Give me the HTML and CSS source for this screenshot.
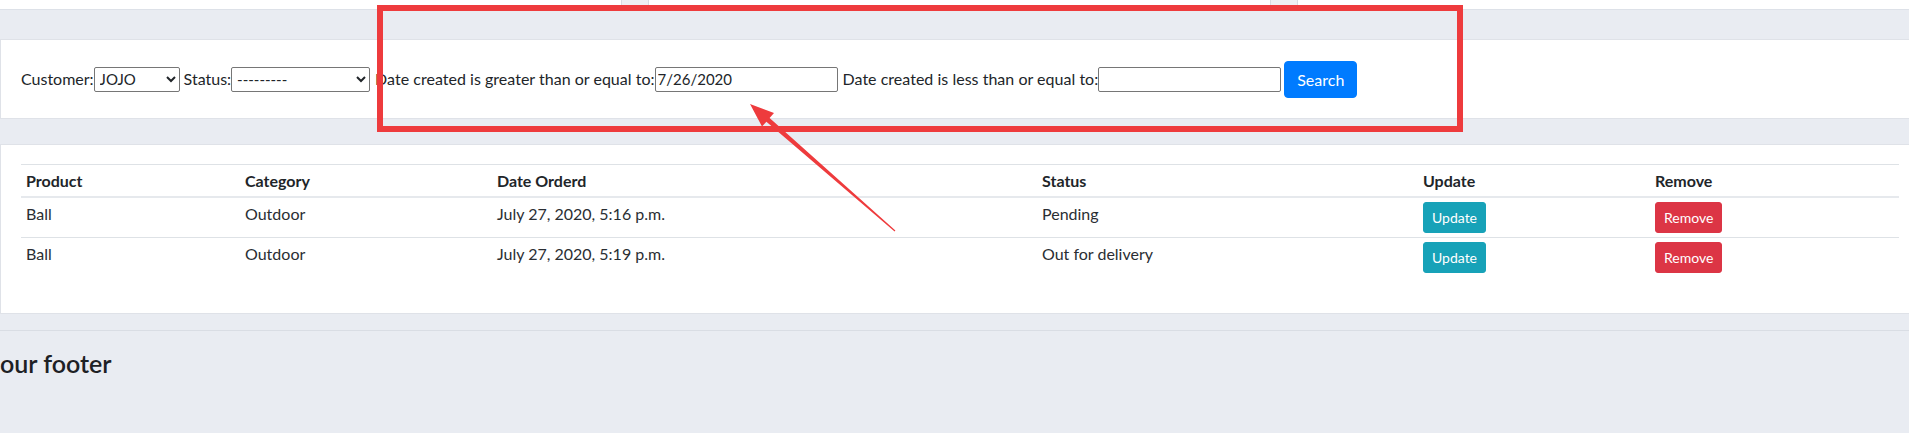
FILE: index.html
```html
<!DOCTYPE html>
<html lang="en">
<head>
<meta charset="utf-8">
<title>Orders</title>
<link rel="stylesheet" href="styles.css">
</head>
<body>
<div class="topbar">
  <span class="tb-addon"></span><span class="tb-input"></span><span class="tb-addon"></span>
</div>
<main class="content">
  <section class="card filter-card">
    <form class="filter">
      <label class="flabel first">Customer:</label><select class="fsel sel-customer"><option>JOJO</option></select>
      <label class="flabel">Status:</label><select class="fsel sel-status"><option>---------</option></select>
      <label class="flabel wide">Date created is greater than or equal to:</label><input class="finput" type="text" value="7/26/2020">
      <label class="flabel wide">Date created is less than or equal to:</label><input class="finput" type="text" value="">
      <button class="btn btn-primary" type="button">Search</button>
    </form>
  </section>
  <section class="card table-card">
    <table class="orders">
      <thead>
        <tr>
          <th class="c-product">Product</th>
          <th class="c-category">Category</th>
          <th class="c-date">Date Orderd</th>
          <th class="c-status">Status</th>
          <th class="c-update">Update</th>
          <th class="c-remove">Remove</th>
        </tr>
      </thead>
      <tbody>
        <tr>
          <td>Ball</td>
          <td>Outdoor</td>
          <td>July 27, 2020, 5:16 p.m.</td>
          <td>Pending</td>
          <td><button class="btn btn-sm btn-info" type="button">Update</button></td>
          <td><button class="btn btn-sm btn-danger" type="button">Remove</button></td>
        </tr>
        <tr>
          <td>Ball</td>
          <td>Outdoor</td>
          <td>July 27, 2020, 5:19 p.m.</td>
          <td>Out for delivery</td>
          <td><button class="btn btn-sm btn-info" type="button">Update</button></td>
          <td><button class="btn btn-sm btn-danger" type="button">Remove</button></td>
        </tr>
      </tbody>
    </table>
  </section>
</main>
<footer class="footer">
  <h4 class="footer-title">our footer</h4>
</footer>

<div class="annot-box"></div>
<svg class="annot-arrow" width="1909" height="433" viewBox="0 0 1909 433">
  <polygon fill="#ee3b3d" points="750,104 774,113 769.6,117.9 895.4,230.6 894.6,231.4 766.4,121.7 762,126.6"/>
</svg>
</body>
</html>
```

FILE: styles.css
```css
* { box-sizing: border-box; }

html, body {
  margin: 0;
  padding: 0;
}

body {
  background: #e9ecf2;
  font-family: Lato, "Open Sans", sans-serif;
  font-size: 16px;
  color: #212529;
  line-height: 1.5;
  position: relative;
  min-height: 433px;
  overflow: hidden;
}

/* top strip (bottom of previous element) */
.topbar {
  height: 10px;
  background: #ffffff;
  border-bottom: 1px solid #dde1e8;
  display: flex;
  padding-left: 621px;
}
.tb-addon {
  width: 28px;
  height: 9px;
  background: #eef0f3;
  border: 1px solid #d8dce2;
  border-top: none;
}
.tb-input {
  width: 621px;
  height: 9px;
  background: #ffffff;
  border-bottom: 1px solid #d8dce2;
}

.content {
  padding-top: 29px;
}

.card {
  background: #ffffff;
  border: 1px solid #dfe2e8;
  border-right: none;
}

.filter-card {
  padding: 20px 20px 20px 20px;
}

.filter {
  display: flex;
  align-items: center;
  height: 38px;
}

.flabel {
  margin-left: 4px;
  white-space: nowrap;
  font-size: 16px;
}
.flabel.first { margin-left: 0; }
.flabel.wide {
  margin-left: 5px;
  letter-spacing: 0.02px;
}

.fsel, .finput {
  height: 25px;
  border: 1px solid #767676;
  border-radius: 2px;
  background: #ffffff;
  font-family: Lato, "Open Sans", sans-serif;
  font-size: 15px;
  color: #212529;
  padding: 0 1px;
}
.sel-customer { width: 86px; }
.sel-status { width: 139px; }
.finput {
  width: 183px;
  padding: 0 2px;
}

.btn {
  font-family: Lato, "Open Sans", sans-serif;
  border: 1px solid transparent;
  color: #ffffff;
  cursor: pointer;
}
.btn-primary {
  margin-left: 3px;
  height: 37px;
  padding: 0 12px;
  font-size: 16px;
  border-radius: 4px;
  background: #007bff;
  border-color: #007bff;
}
.btn-sm {
  height: 31px;
  padding: 0 8px;
  font-size: 14px;
  border-radius: 3px;
  line-height: 29px;
}
.btn-info {
  background: #17a2b8;
  border-color: #17a2b8;
}
.btn-danger {
  background: #dc3545;
  border-color: #dc3545;
}

.table-card {
  margin-top: 25px;
  padding: 19px 10px 20px 20px;
}

.orders {
  width: 1878px;
  table-layout: fixed;
  border-collapse: collapse;
  margin-bottom: 16px;
}
.orders th, .orders td {
  text-align: left;
  vertical-align: top;
  padding: 4px 5px;
  border-top: 1px solid #dee2e6;
  line-height: 24px;
}
.orders th {
  font-weight: 700;
  padding-bottom: 3px;
  border-bottom: 2px solid #e6e9ed;
}
.orders td {
  font-weight: 400;
  color: #2a2e33;
}
.c-product { width: 219px; }
.c-category { width: 252px; }
.c-date { width: 545px; }
.c-status { width: 381px; }
.c-update { width: 232px; }
.c-remove { width: 249px; }

.footer {
  margin-top: 16px;
  border-top: 1px solid #d9dde4;
  padding-top: 18px;
}
.footer-title {
  margin: 0;
  font-size: 25px;
  font-weight: 600;
  line-height: 29px;
  color: #1d2125;
}

/* screenshot annotation overlay */
.annot-box {
  position: absolute;
  left: 377px;
  top: 5px;
  width: 1086px;
  height: 127px;
  border: 6px solid #ee3b3d;
  pointer-events: none;
}
.annot-arrow {
  position: absolute;
  left: 0;
  top: 0;
  pointer-events: none;
}
```
